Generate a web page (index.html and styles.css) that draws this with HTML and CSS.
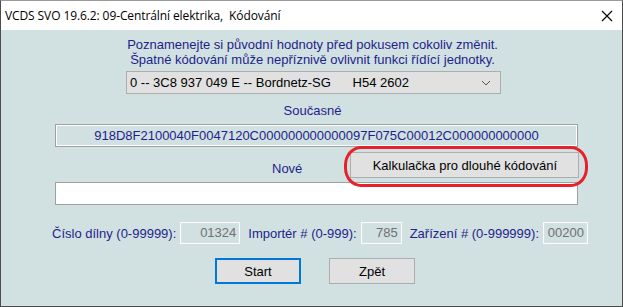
FILE: index.html
```html
<!DOCTYPE html>
<html lang="cs">
<head>
  <meta charset="UTF-8">
  <meta name="viewport" content="width=device-width, initial-scale=1.0">
  <title>VCDS SVO - Kódování</title>
  <link rel="stylesheet" href="styles.css">
</head>
<body>
  <div class="window">
    <div class="titlebar">
      <span class="title">VCDS SVO 19.6.2: 09-Centrální elektrika,&nbsp; Kódování</span>
      <svg class="close-icon" width="12" height="12" viewBox="0 0 12 12" fill="none" stroke="#000" stroke-width="1.1">
        <path d="M1 1l10 10M11 1L1 11"></path>
      </svg>
    </div>
    <div class="content">
      <p class="notice">
        Poznamenejte si původní hodnoty před pokusem cokoliv změnit.<br>
        Špatné kódování může nepříznivě ovlivnit funkci řídící jednotky.
      </p>

      <div class="select-box">
        <span>0 -- 3C8 937 049 E -- Bordnetz-SG&nbsp;&nbsp;&nbsp;&nbsp;&nbsp; H54 2602</span>
        <svg class="chevron" width="10" height="6" viewBox="0 0 10 6" fill="none" stroke="#555" stroke-width="1">
          <path d="M1 1l4 4 4-4"></path>
        </svg>
      </div>

      <div class="label-current">Současné</div>
      <div class="code-box">918D8F2100040F0047120C000000000000097F075C00012C000000000000</div>

      <div class="new-row">
        <span class="label-new">Nové</span>
        <button type="button" class="win-button calc-button">Kalkulačka pro dlouhé kódování</button>
      </div>
      <div class="new-input"></div>

      <div class="fields-row">
        <label class="field-label">Číslo dílny (0-99999):</label>
        <div class="num-field w-shop">01324</div>
        <label class="field-label">Importér # (0-999):</label>
        <div class="num-field w-imp">785</div>
        <label class="field-label">Zařízení # (0-999999):</label>
        <div class="num-field w-eq">00200</div>
      </div>

      <div class="button-row">
        <button type="button" class="win-button default-button">Start</button>
        <button type="button" class="win-button">Zpět</button>
      </div>

      <div class="highlight"></div>
    </div>
  </div>
</body>
</html>
```

FILE: styles.css
```css
* {
  box-sizing: border-box;
  margin: 0;
  padding: 0;
}

body {
  width: 623px;
  height: 307px;
  overflow: hidden;
  font-family: 'Liberation Sans', Arial, sans-serif;
  font-size: 13px;
  background: #ffffff;
}

.window {
  width: 623px;
  height: 307px;
  border: 1px solid #4c4c4c;
  border-top-color: #9a9a9a;
  display: flex;
  flex-direction: column;
}

.titlebar {
  height: 29px;
  background: #ffffff;
  display: flex;
  align-items: center;
  justify-content: space-between;
  padding: 0 9px 0 4px;
}

.title {
  font-family: 'Open Sans', 'Noto Sans', sans-serif;
  font-size: 12px;
  color: #000;
  letter-spacing: -0.1px;
}

.close-icon {
  margin-top: 1px;
}

.content {
  position: relative;
  flex: 1;
  background: #d1e0e0;
  color: #1e1e8c;
  padding-top: 7px;
}

.notice {
  text-align: center;
  line-height: 15px;
  margin-left: 2px;
}

.select-box {
  margin: 4px 0 0 125px;
  width: 375px;
  height: 23px;
  background: #e1e1e1;
  border: 1px solid #adadad;
  color: #000;
  display: flex;
  align-items: center;
  justify-content: space-between;
  padding: 0 9px 0 3px;
}

.chevron {
  margin-top: 1px;
}

.label-current {
  margin-top: 9px;
  text-align: center;
  line-height: 15px;
  margin-left: 2px;
}

.code-box {
  margin: 6px 0 0 54px;
  width: 523px;
  height: 23px;
  border: 1px solid #a0a0a0;
  box-shadow: inset 0 0 0 1px #ffffff;
  text-align: center;
  line-height: 21px;
}

.new-row {
  display: flex;
  align-items: center;
  margin-top: 5px;
  height: 26px;
}

.label-new {
  margin-left: 271px;
  margin-top: 6px;
}

.win-button {
  font-family: 'Liberation Sans', Arial, sans-serif;
  font-size: 13px;
  color: #000;
  background: #e1e1e1;
  border: 1px solid #adadad;
  height: 26px;
  width: 86px;
}

.calc-button {
  margin-left: 48px;
  width: 229px;
}

.new-input {
  margin: 4px 0 0 54px;
  width: 523px;
  height: 23px;
  background: #ffffff;
  border: 1px solid #a0a0a0;
}

.fields-row {
  display: flex;
  align-items: center;
  margin: 17px 0 0 51px;
  height: 22px;
}

.field-label {
  margin-right: 4px;
}

.num-field {
  height: 22px;
  border: 1px solid #fbfbfb;
  box-shadow: inset 0 0 0 1px #d8e2e2;
  color: #707070;
  text-align: right;
  line-height: 20px;
  padding-right: 3px;
  margin-right: 8px;
}

.w-shop {
  width: 60px;
}

.w-imp {
  width: 41px;
}

.w-eq {
  width: 45px;
}

.button-row {
  display: flex;
  gap: 28px;
  margin: 14px 0 0 214px;
}

.default-button {
  border: 2px solid #0078d7;
}

.highlight {
  position: absolute;
  left: 343px;
  top: 116px;
  width: 244px;
  height: 41px;
  border: 3px solid #e8202a;
  border-radius: 17px / 19px;
}
```
